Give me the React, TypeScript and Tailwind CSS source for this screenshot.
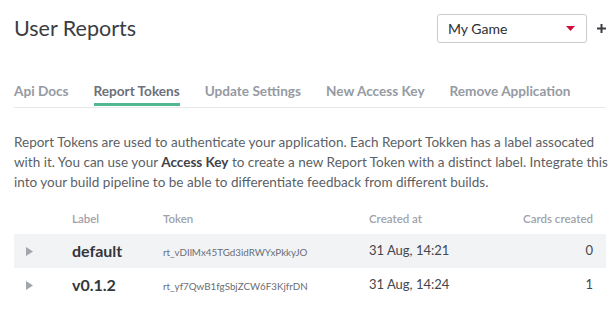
import React from "react";

const tabs = ["Api Docs", "Report Tokens", "Update Settings", "New Access Key", "Remove Application"];

const rows = [
  { label: "default", token: "rt_vDIlMx45TGd3idRWYxPkkyJO", created: "31 Aug, 14:21", cards: "0", shaded: true },
  { label: "v0.1.2", token: "rt_yf7QwB1fgSbjZCW6F3KjfrDN", created: "31 Aug, 14:24", cards: "1", shaded: false },
];

export default function App() {
  return (
    <div className="w-[616px] h-[311px] overflow-hidden bg-white pl-[14px] pr-[10px] font-['Lato',sans-serif]">
      {/* Header */}
      <div className="flex items-center pt-[14px] h-[43px]">
        <h1 className="flex-1 text-[21.5px] leading-[29px] text-[#3a3d42] font-normal">User Reports</h1>
        <div className="w-[150px] h-[29px] border border-[#c9cacd] rounded-[3px] flex items-center pl-[10px] pr-[11px]">
          <span className="flex-1 text-[14px] text-[#2c2e33]">My Game</span>
          <svg width="9" height="5" viewBox="0 0 9 5">
            <path d="M0 0 L9 0 L4.5 5 Z" fill="#d0103a" />
          </svg>
        </div>
        <svg className="ml-[10px]" width="9" height="9" viewBox="0 0 9 9">
          <path d="M3.5 0 H5.5 V3.5 H9 V5.5 H5.5 V9 H3.5 V5.5 H0 V3.5 H3.5 Z" fill="#3a3d42" />
        </svg>
      </div>

      {/* Tabs */}
      <div className="mt-[39px] flex gap-[25px] border-b border-[#e8e9eb]">
        {tabs.map((t) => (
          <div
            key={t}
            className={
              t === "Report Tokens"
                ? "pb-[3px] border-b-[3px] border-[#52b892] text-[13.6px] font-bold leading-[18px] text-[#6c707a] mb-[1px]"
                : "pb-[3px] border-b-[3px] border-transparent text-[13.6px] font-bold leading-[18px] text-[#959aa3] mb-[1px]"
            }
          >
            {t}
          </div>
        ))}
      </div>

      {/* Description */}
      <p className="mt-[24px] text-[13.5px] leading-[20px] text-[#5b5f66] whitespace-nowrap w-[600px]">
        Report Tokens are used to authenticate your application. Each Report Tokken has a label assocated
        <br />
        with it. You can use your <b className="font-bold text-[#3f4248]">Access Key</b> to create a new Report Token with a distinct label. Integrate this
        <br />
        into your build pipeline to be able to differentiate feedback from different builds.
      </p>

      {/* Table */}
      <div className="mt-[12px] w-[592px]">
        <div className="grid grid-cols-[58px_91px_206px_1fr_auto] items-center h-[30px] pr-[13px] text-[11.5px] font-semibold text-[#9fa2aa]">
          <div />
          <div>Label</div>
          <div>Token</div>
          <div>Created at</div>
          <div className="text-right">Cards created</div>
        </div>
        {rows.map((r) => (
          <div
            key={r.label}
            className={
              r.shaded
                ? "grid grid-cols-[58px_91px_206px_1fr_auto] items-center h-[34px] pr-[13px] bg-[#f2f3f5]"
                : "grid grid-cols-[58px_91px_206px_1fr_auto] items-center h-[34px] pr-[13px]"
            }
          >
            <div className="pl-[12px] flex items-center">
              <svg width="7" height="9" viewBox="0 0 7 9">
                <path d="M0 0 L7 4.5 L0 9 Z" fill="#a3a5ac" />
              </svg>
            </div>
            <div className="text-[16px] font-bold text-[#33363b]">{r.label}</div>
            <div className="text-[9.8px] text-[#6a6e75] pt-[3px]">{r.token}</div>
            <div className="text-[13px] text-[#44474d]">{r.created}</div>
            <div className="text-right text-[13px] text-[#44474d]">{r.cards}</div>
          </div>
        ))}
      </div>
    </div>
  );
}
